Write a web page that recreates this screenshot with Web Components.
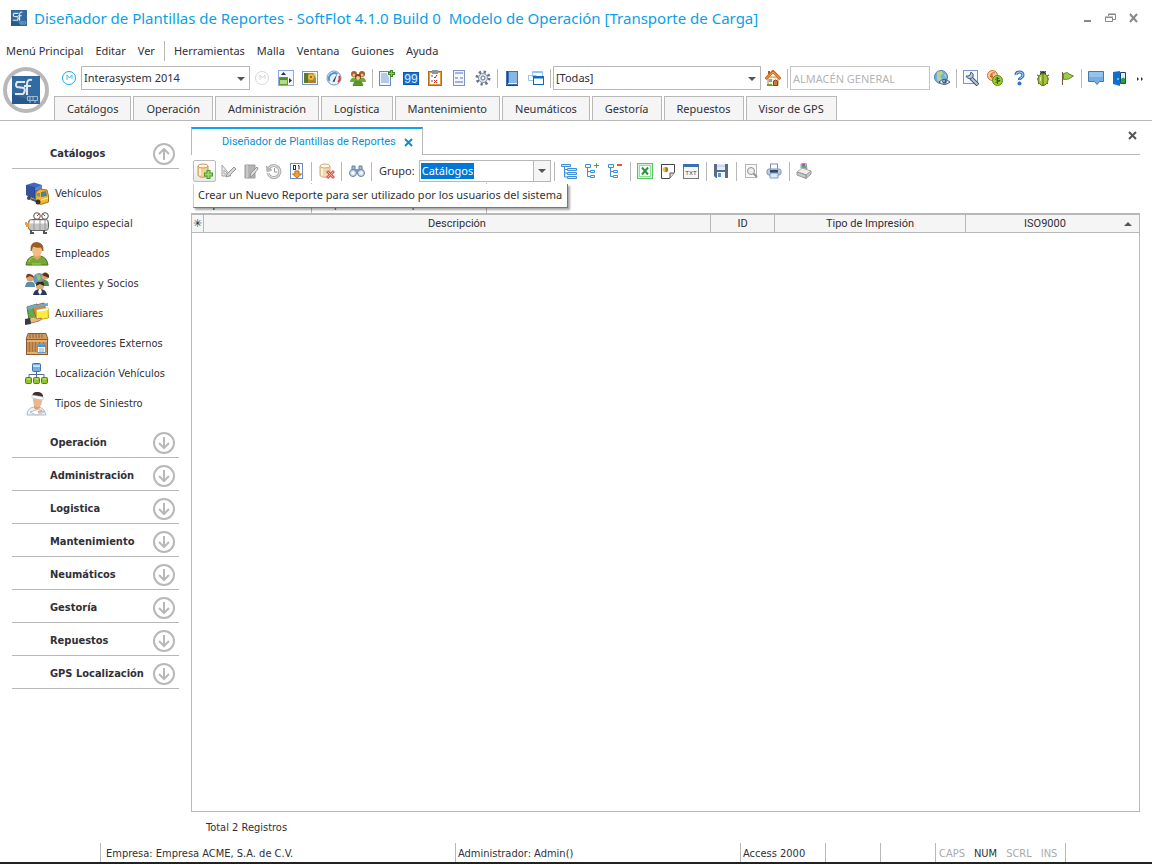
<!DOCTYPE html>
<html lang="es">
<head>
<meta charset="utf-8">
<meta name="viewport" content="width=device-width, initial-scale=1">
<title>Diseñador de Plantillas de Reportes - SoftFlot</title>
<style>
  :root {
    --line: #b8b8b8;
    --panel: #f5f5f5;
    --accent: #0a9fe8;
    --text: #303036;
    --ui: "Noto Sans", "Open Sans", sans-serif;
    --small: "DejaVu Sans Condensed", "Noto Sans", sans-serif;
    --grid: Roboto, "Liberation Sans", sans-serif;
  }

  body {
    margin: 0;
    background: #fff;
    color: var(--text);
    font: 11px/16px var(--ui);
  }
</style>
</head>
<body>
<app-window>
  <title-bar slot="title">Diseñador de Plantillas de Reportes - SoftFlot 4.1.0 Build 0 &nbsp;Modelo de Operación [Transporte de Carga]</title-bar>
  <menu-bar slot="menu"></menu-bar>

  <tool-bar slot="tools" label="Principal">
    <tool-button icon="mark" label="Empresa"></tool-button>
    <combo-box label="Empresa" value="Interasystem 2014" style="--width: 169px"></combo-box>
    <tool-button icon="mark-off" label="Cambiar empresa"></tool-button>
    <tool-button icon="layout" label="Distribución"></tool-button>
    <tool-button icon="picture" label="Imagen"></tool-button>
    <tool-button icon="gauge" label="Indicadores"></tool-button>
    <tool-button icon="users" label="Usuarios"></tool-button>
    <tool-separator></tool-separator>
    <tool-button icon="page-add" label="Nuevo documento"></tool-button>
    <tool-button icon="counter" label="Contadores"></tool-button>
    <tool-button icon="checklist" label="Pendientes"></tool-button>
    <tool-button icon="form" label="Formularios"></tool-button>
    <tool-button icon="gear" label="Configuración"></tool-button>
    <tool-separator></tool-separator>
    <tool-button icon="book" label="Bitácora"></tool-button>
    <tool-button icon="windows" label="Ventanas"></tool-button>
    <tool-separator></tool-separator>
    <combo-box label="Sucursal" value="[Todas]" style="--width: 208px"></combo-box>
    <tool-button icon="home" label="Inicio"></tool-button>
    <tool-separator></tool-separator>
    <text-field label="Almacén" value="ALMACÉN GENERAL"></text-field>
    <tool-button icon="globe" label="Ver en mapa"></tool-button>
    <tool-separator></tool-separator>
    <tool-button icon="wrench" label="Opciones"></tool-button>
    <tool-button icon="coins" label="Monedas"></tool-button>
    <tool-button icon="help" label="Ayuda"></tool-button>
    <tool-button icon="bug" label="Reportar error"></tool-button>
    <tool-button icon="flag" label="Marcar"></tool-button>
    <tool-separator></tool-separator>
    <tool-button icon="message" label="Mensajes"></tool-button>
    <tool-button icon="exit" label="Salir"></tool-button>
    <tool-button icon="more" label="Más botones" narrow></tool-button>
  </tool-bar>

  <category-tabs slot="tabs"></category-tabs>

  <side-nav slot="side">
    <nav-group heading="Catálogos" open>
      <nav-item icon="truck">Vehículos</nav-item>
      <nav-item icon="tank">Equipo especial</nav-item>
      <nav-item icon="person">Empleados</nav-item>
      <nav-item icon="partners">Clientes y Socios</nav-item>
      <nav-item icon="folders">Auxiliares</nav-item>
      <nav-item icon="crate">Proveedores Externos</nav-item>
      <nav-item icon="network">Localización Vehículos</nav-item>
      <nav-item icon="injured">Tipos de Siniestro</nav-item>
    </nav-group>
    <nav-group heading="Operación"></nav-group>
    <nav-group heading="Administración"></nav-group>
    <nav-group heading="Logistica"></nav-group>
    <nav-group heading="Mantenimiento"></nav-group>
    <nav-group heading="Neumáticos"></nav-group>
    <nav-group heading="Gestoría"></nav-group>
    <nav-group heading="Repuestos"></nav-group>
    <nav-group heading="GPS Localización"></nav-group>
  </side-nav>

  <document-pane heading="Diseñador de Plantillas de Reportes">
    <tool-bar slot="tools" label="Reportes" compact>
      <tool-button icon="db-add" label="Nuevo reporte" hot
        tip="Crear un Nuevo Reporte para ser utilizado por los usuarios del sistema"></tool-button>
      <tool-button icon="edit" label="Diseñar"></tool-button>
      <tool-button icon="notebook" label="Propiedades"></tool-button>
      <tool-button icon="undo" label="Restaurar"></tool-button>
      <tool-button icon="import" label="Importar"></tool-button>
      <tool-separator></tool-separator>
      <tool-button icon="db-delete" label="Eliminar"></tool-button>
      <tool-separator></tool-separator>
      <tool-button icon="binoculars" label="Buscar"></tool-button>
      <tool-separator></tool-separator>
      <combo-box label="Grupo:" value="Catálogos" show-label editing style="--width: 132px"></combo-box>
      <tool-separator></tool-separator>
      <tool-button icon="tree" label="Árbol"></tool-button>
      <tool-button icon="tree-add" label="Expandir"></tool-button>
      <tool-button icon="tree-remove" label="Contraer"></tool-button>
      <tool-separator></tool-separator>
      <tool-button icon="excel" label="Exportar a Excel"></tool-button>
      <tool-button icon="html" label="Exportar a HTML"></tool-button>
      <tool-button icon="txt" label="Exportar a texto"></tool-button>
      <tool-separator></tool-separator>
      <tool-button icon="save" label="Guardar"></tool-button>
      <tool-separator></tool-separator>
      <tool-button icon="preview" label="Vista previa"></tool-button>
      <tool-button icon="print" label="Imprimir"></tool-button>
      <tool-separator></tool-separator>
      <tool-button icon="printer-setup" label="Configurar impresora"></tool-button>
    </tool-bar>
    <report-grid></report-grid>
  </document-pane>

  <status-bar slot="status"></status-bar>
</app-window>

<script>
const treeRows = `<path d="M1.500 1.500h5v3h-5zM3.500 4.500v9h3M3.500 8.500h3" fill="#fff" stroke="#3f8fd8"/>`;
const database = (a, b) => `
  <path d="M1 3v9c0 3 10 3 10 0V3z" fill="${a}" stroke="${b}"/>
  <ellipse cx="6" cy="3" rx="5" ry="2" fill="#fffaf0" stroke="${b}"/>
  <path d="M3 5.500v7" stroke="#fff" stroke-width="2" opacity=".7"/>`;

const icons = {
  logo: `<rect width="28" height="28" fill="#336a9f"/>
    <path d="M0 18L28 28H0z" fill="#28598b"/>
    <path d="M13 6H5q-2 3 0 5l7 1q2 3-1 6H3" fill="none" stroke="#dfe8f0" stroke-width="2"/>
    <path d="M15 19V9c0-5 2-6 5-5M12 10h7" fill="none" stroke="#dfe8f0" stroke-width="2"/>
    <path d="M15.500 20.500h10v4h-10zM18 21v3M21 21v3M17 26h2M22 26h2" fill="none" stroke="#9dbad2"/>`,
  mark: `<circle cx="8" cy="8" r="6.500" fill="#fff" stroke="#13a8ef"/><path d="M6 10V5l2.500 3L11 5v4" fill="none" stroke="#4dbdf2"/>`,
  "mark-off": `<circle cx="8" cy="8" r="6.500" fill="#fff" stroke="#d8d8d8"/><path d="M6 10V5l2.500 3L11 5v4" fill="none" stroke="#d4d4d4"/>`,
  layout: `<rect x=".5" y=".5" width="15" height="15" fill="#f4f7fd" stroke="#8fa9d8"/>
    <rect x="1.500" y="7.500" width="8" height="7" fill="#b4dc87" stroke="#5d9d32"/><path d="M2 9h7" stroke="#4e8f2b" stroke-width="2"/>
    <path d="M3 5l2.500-3L8 5zM11 8l3 2.500-3 2.500z" fill="#2c2f3c"/>`,
  picture: `<rect x=".5" y="1.500" width="15" height="13" fill="#fff" stroke="#7695cc"/><rect x="2" y="3" width="12" height="10" fill="#8a9c36"/>
    <path d="M2 3h4v10H2z" fill="#5a7a2a"/><path d="M6 13l5-4 3 4z" fill="#c86f28"/><circle cx="9" cy="7" r="3" fill="#f3b63a"/><circle cx="9" cy="7" r="1" fill="#a04418"/><path d="M11 3l3 5V3z" fill="#e8d67a"/>`,
  gauge: `<circle cx="8" cy="8" r="7" fill="#eaf3fc" stroke="#7797bd"/><path d="M3.500 11a5.500 5.500 0 0 1 8-7" fill="none" stroke="#4a91e2" stroke-width="2"/>
    <path d="M13 6a5 5 0 0 1-1 6" fill="none" stroke="#e23b33" stroke-width="2"/><path d="M6.500 11.500L11 4 8.500 12z" fill="#33435a"/>`,
  users: `<circle cx="4" cy="4" r="3" fill="#a4612a"/><circle cx="12" cy="4" r="3" fill="#a4612a"/><path d="M0 12c0-6 8-6 8 0zM8 12c0-6 8-6 8 0z" fill="#6eac35"/>
    <circle cx="4" cy="5" r="1.500" fill="#f2bd85"/><circle cx="12" cy="5" r="1.500" fill="#f2bd85"/><circle cx="8" cy="7" r="3" fill="#7d4522"/><circle cx="8" cy="8" r="2" fill="#f6c890"/>
    <path d="M3 16c0-7 10-7 10 0z" fill="#59972c" stroke="#447920" stroke-width=".5"/>`,
  "page-add": `<rect x=".5" y="1.500" width="11" height="14" fill="#eff6ff" stroke="#678abf"/><path d="M2 4h6M2 6h7M2 8h8M2 10h8M2 12h8" stroke="#79a0d4"/>
    <path d="M12.500 0v7M9 3.500h7" stroke="#3f8b22" stroke-width="3"/><path d="M12.500 1v5M10 3.500h5" stroke="#84cf4c"/>`,
  counter: `<rect y="2" width="16" height="13" fill="#0b55b5"/><rect x="1" y="3" width="14" height="11" fill="#1a70d0"/>
    <text x="8" y="13" text-anchor="middle" font-family="Liberation Sans" font-size="12" fill="#d5efff">99</text>`,
  checklist: `<rect x="1.500" y="1.500" width="13" height="14" fill="#e59a39" stroke="#b76a1c"/><rect x="3" y="3" width="10" height="11" fill="#fff"/>
    <rect x="5" width="6" height="4" fill="#8a97a8"/><path d="M7 7l1 1 2-3M7 10l3 3M10 10l-3 3" stroke="#c03030" fill="none"/><path d="M4 6h2M4 11h2" stroke="#555"/>`,
  form: `<rect x="2.500" y=".5" width="11" height="15" fill="#f2f5fd" stroke="#7d93c0"/><path d="M4 3h8M4 8h3M9 8h3M4 12h8" stroke="#a5b5d6" stroke-width="2"/>`,
  gear: `<circle cx="8" cy="8" r="6" fill="none" stroke="#657288" stroke-width="3" stroke-dasharray="2.200 2.500"/><circle cx="8" cy="8" r="4.500" fill="#dfe6f0" stroke="#8a97ab"/><circle cx="8" cy="8" r="2" fill="#fff" stroke="#657288"/>`,
  book: `<rect x="2" y="1" width="12" height="14" fill="#3c72b0"/><rect x="5" y="2" width="8" height="11" fill="#89b7e5"/><path d="M3.500 1v13" stroke="#1d4679"/><path d="M4 13.500h9" stroke="#e7f0fa"/><path d="M2 15.500h12" stroke="#1c4a80"/>`,
  windows: `<path d="M4.500 7V1.500h10V6M4.500 2.500h10M5 10.500H.5v-5h8" fill="none" stroke="#8fc5ee"/><rect x="5.500" y="6.500" width="10" height="8" fill="#fff" stroke="#0e68c5"/><path d="M5 7.500h11" stroke="#0e68c5" stroke-width="2"/>`,
  home: `<path d="M3 7h10v8.500H3z" fill="#fff0d0" stroke="#b2864e"/><path d="M3 1h2v3H3z" fill="#b5522a"/><path d="M.5 9L8 1.500 15.500 9" fill="none" stroke="#c9661f" stroke-width="3"/><path d="M1 8.500L8 2l7 6.500" fill="none" stroke="#f9a650"/>
    <rect x="4" y="9" width="3" height="3" fill="#70a5dc"/><path d="M8.500 15.500V11q2-2 4 0v4.500z" fill="#c67a45" stroke="#804820"/><path d="M2 15h5" stroke="#67a13a" stroke-width="2"/>`,
  globe: `<circle cx="7" cy="7" r="6.500" fill="#74aee2" stroke="#4b7eae"/><path d="M3 2l5-1 1 3-3 2 2 3-2 4-3-3zM11 3l2 5-3-2z" fill="#b5d688"/><path d="M5 12q5-5 11 0-6 5-11 0z" fill="#eef3fb" stroke="#3f506e"/><circle cx="10.500" cy="11.500" r="2.300" fill="#3a5794"/><circle cx="10" cy="11" r=".8" fill="#fff"/>`,
  wrench: `<rect x=".5" y=".5" width="14" height="13" fill="#f6f9ff" stroke="#7796ce"/><path d="M15 15L8 8" stroke="#3f5473" stroke-width="4"/><path d="M14.500 14.500L8 8" stroke="#b4c6dc" stroke-width="2"/><path d="M3 6a4 4 0 0 0 7 1 4 4 0 0 0-2-5L7 5 5 6z" fill="#b4c6dc" stroke="#4b5f7e"/>`,
  coins: `<circle cx="5.500" cy="5.500" r="5" fill="#f9cb9c" stroke="#cf6d2c"/><path d="M8 3q-4-1-4 2.500T8 8M3 5h3M3 6.500h3" fill="none" stroke="#c85f24"/><circle cx="10.500" cy="10.500" r="5" fill="#9bce2e" stroke="#568717"/>
    <path d="M12.500 8.500q-4-1-4 .5t3.500 1.500-3.500 2M10.500 7v7" fill="none" stroke="#34600d"/>`,
  help: `<path d="M5 5q0-3 3.500-3T12 5q0 2-3.500 4v1" fill="none" stroke="#3774b8" stroke-width="3"/><path d="M5 5q0-3 3.500-3T12 5q0 2-3.500 4" fill="none" stroke="#a9d2f6"/><circle cx="8.500" cy="13.500" r="2" fill="#3774b8"/>`,
  bug: `<path d="M2 5l2 1M2 9h2M3 14l2-2M14 5l-2 1M14 9h-2M13 14l-2-2M5 1l2 2M11 1L9 3" stroke="#555"/><circle cx="8" cy="4" r="3" fill="#363d42"/><ellipse cx="8" cy="9.500" rx="5" ry="6" fill="#a4c637" stroke="#4f6c1b"/><path d="M8 4v11" stroke="#4f6c1b"/><path d="M5.500 7v4" stroke="#e0ef9b"/>`,
  flag: `<path d="M3.500 2v13" stroke="#775633"/><path d="M4.500 3.500l4-1 .5 1 5.500 2.500-5 3-5 .5z" fill="#9ccc4c" stroke="#5a9128"/>`,
  message: `<path d="M.5 1.500h15v10h-4L9 14.500 6.500 11.500h-6z" fill="#74aee2" stroke="#4579aa"/><path d="M1 2h14v5H1z" fill="#a2cdf2" opacity=".7"/>`,
  exit: `<path d="M1 2l7-1v15l-7-2z" fill="#0b72d0"/><path d="M8.500 2.500h5v11h-5z" fill="#d9f0ff" stroke="#17477b"/><path d="M9 9q3-3 4 0v4H9z" fill="#25a33a"/><circle cx="6" cy="9" r=".8" fill="#fff"/>`,
  more: `<path d="M4 7v4l2-2zM8 7v4l2-2z" fill="#333"/>`,
  "db-add": `${database("#f6d08c", "#c59b52")}<path d="M11.500 7v9M7 11.500h9" stroke="#4b9830" stroke-width="4"/><path d="M11.500 8v7M8 11.500h7" stroke="#96d86e" stroke-width="2"/>`,
  "db-delete": `${database("#f4d9ad", "#cfac74")}<path d="M8 8l7 7M15 8l-7 7" stroke="#d15a55" stroke-width="3"/><path d="M8.500 8.500l6 6M14.500 8.500l-6 6" stroke="#f3aca6"/>`,
  edit: `<path d="M2 2v11h9z" fill="#eee" stroke="#a2a2a2"/><path d="M4 7v4h4z" fill="#fff" stroke="#aaa"/><path d="M7 11l7-7 2 2-7 7-3 1z" fill="#d5d5d5" stroke="#999"/>`,
  notebook: `<path d="M2 2h10v13H2z" fill="#b4b4b4" stroke="#9b9b9b"/><path d="M4 2v13" stroke="#ddd"/><path d="M8 10l6-6 1 2-6 7-2 1z" fill="#e4e4e4" stroke="#929292"/>`,
  undo: `<path d="M3 5a6 6 0 1 1-1 5" fill="none" stroke="#ababab" stroke-width="3"/><path d="M3 5a6 6 0 1 1-1 5" fill="none" stroke="#eee"/><path d="M0 3l1 6 5-2z" fill="#bbb" stroke="#999" stroke-width=".5"/><path d="M8.500 5v4h3" fill="none" stroke="#999"/>`,
  import: `<rect x="1.500" y=".5" width="12" height="15" fill="#fff" stroke="#6f8dc4"/><rect x="4.500" y="2.500" width="2" height="4" fill="none" stroke="#333"/><path d="M9 2.500h1v4" fill="none" stroke="#333"/><path d="M6 8h4v3h2.500L8 15 3.500 11H6z" fill="#f2a03c" stroke="#bb6a1a"/>`,
  binoculars: `<path d="M3 3h3v4H3zM10 3h3v4h-3z" fill="#a9bcd8" stroke="#667da3"/><path d="M6 6h4v3H6z" fill="#8498bd"/><circle cx="4" cy="10" r="3.500" fill="#cfdcef" stroke="#667da3"/><circle cx="12" cy="10" r="3.500" fill="#cfdcef" stroke="#667da3"/><circle cx="4" cy="10" r="1.500" fill="#fff"/><circle cx="12" cy="10" r="1.500" fill="#fff"/>`,
  tree: `<path d="M.5 1.500h9v2h-9zM3.500 4v10H6M3.500 6.500H6M3.500 10H6M6.500 5.500h9v2h-9zM6.500 9.500h9v2h-9zM6.500 13.500h9v2h-9z" fill="#d4e9fc" stroke="#3f8fd8"/>`,
  "tree-add": `${treeRows}<path d="M6.500 7.500h4v2h-4zM6.500 12.500h4v2h-4z" fill="#fff" stroke="#3f8fd8"/><path d="M12.500 0v5M10 2.500h5" stroke="#559955"/>`,
  "tree-remove": `${treeRows}<path d="M6.500 7.500h4v2h-4zM6.500 12.500h4v2h-4z" fill="#fff" stroke="#3f8fd8"/><path d="M10 2h5" stroke="#e0513f" stroke-width="2"/>`,
  excel: `<rect x=".5" y=".5" width="15" height="15" fill="#d5f3d8" stroke="#52c860"/><rect x="2.500" y="2.500" width="11" height="11" fill="#fff" stroke="#93dc9b"/><path d="M5 4.500l6 7M11 4.500l-6 7" stroke="#279535" stroke-width="2"/>`,
  html: `<path d="M1.500 1.500h13v8l-5 6h-8z" fill="#fff" stroke="#444"/><path d="M14 10h-4v5" fill="#ddd" stroke="#555"/><circle cx="5.500" cy="6.500" r="2.800" fill="#f0c23b"/><path d="M5.500 6.500V4A2.500 2.500 0 0 1 8 6.500z" fill="#3a9f47"/><path d="M5.500 6.500H8A2.500 2.500 0 0 1 5.500 9z" fill="#dd4137"/>`,
  txt: `<rect x=".5" y="1.500" width="15" height="14" fill="#f6f6f6" stroke="#777"/><path d="M0 2.500h16" stroke="#386fb5" stroke-width="3"/><text x="8" y="12" text-anchor="middle" font-family="Liberation Sans" font-size="6" fill="#444">TXT</text>`,
  save: `<path d="M1 1h14v14H3l-2-2z" fill="#5a6b88"/><path d="M4 1h8v6H4z" fill="#e4edf8"/><path d="M4 9h8v6H4z" fill="#f2f4f8"/><path d="M5 10h3v4H5z" fill="#4a9ad8"/><path d="M4 3h8" stroke="#9fc7ea"/>`,
  preview: `<rect x="2.500" y="1.500" width="11" height="13" fill="#fafafa" stroke="#b5b5b5"/><circle cx="8" cy="8" r="3.500" fill="#eee" stroke="#929292"/><path d="M10.500 10.500L14 14" stroke="#929292" stroke-width="2"/>`,
  print: `<rect x="4.500" y="1" width="7" height="6" fill="#fff" stroke="#7d8fb5"/><rect x="1" y="6" width="14" height="6" rx="2" fill="#c0cce2" stroke="#7f92b8"/><path d="M4 7h8v3H4z" fill="#34486e"/><path d="M4 10h8v5H4z" fill="#d7ebff" stroke="#7f9cc7"/>`,
  "printer-setup": `<path d="M5 5V1l5-1 1 6z" fill="#a7cfee" stroke="#8d99a8"/><path d="M6 2h3" stroke="#b34dbb" stroke-width="2"/><path d="M6 4h4" stroke="#59b35a" stroke-width="2"/><path d="M1 9l5-4 9 3-4 4z" fill="#eee" stroke="#aaa"/><path d="M1 9v3l9 3.500V12zM10 12l5-4v3l-5 4.500z" fill="#c9c9c9" stroke="#999"/>`,
  truck: `<path d="M1 3l8-2.500L17 3v12l-7 2-9-4z" fill="#4167bf"/><path d="M1 3l9 2.500V17l-9-4z" fill="#294995"/><path d="M2 4v9M4 4.500v10M6 5v10M8 6v10" stroke="#3b5ca9"/><path d="M10 6l7-3v5h-7z" fill="#5d84d7"/><path d="M11 10l4-3 7 1 1.500 6v6l-8 2.500-5-3z" fill="#efb92d" stroke="#a36f14"/><path d="M16 10l5-1 1 5-6 1z" fill="#517e99"/><path d="M12 11l3 0v4l-3-1z" fill="#6d96ae"/><path d="M16 18l7-2" stroke="#fff2a8"/><circle cx="13" cy="20" r="2.500" fill="#333"/><circle cx="4" cy="16" r="2" fill="#444"/><path d="M6 17l5 2" stroke="#555" stroke-width="2"/>`,
  tank: `<circle cx="12" cy="4" r="3.300" fill="#fff" stroke="#555"/><circle cx="20" cy="4" r="3.300" fill="#fff" stroke="#555"/><path d="M12 4l2-2M20 4l-2-2" stroke="#d33"/><path d="M12 8v3M20 8v3" stroke="#666" stroke-width="2"/><rect x="3.500" y="7.500" width="20" height="11" rx="3" fill="#c4c4c4" stroke="#666"/><path d="M5 10h17" stroke="#fff" stroke-width="3"/><path d="M9 8v10M15 8v10M20 8v10" stroke="#999"/><path d="M6 18v3h3M19 18v3h3" fill="none" stroke="#555" stroke-width="2"/><path d="M1 10v2h3M1 14h3" fill="none" stroke="#e2a13b" stroke-width="2"/>`,
  person: `<path d="M1 23q1-8 8-9h6q7 1 8 9z" fill="#75a936" stroke="#477719"/><path d="M9 12h6l1 3-4 3-4-3z" fill="#e4a265"/><ellipse cx="12" cy="8" rx="5" ry="6.500" fill="#f1bd83"/><path d="M6 9Q5 0 12 .5T18 9L16 5Q11 6 8 4z" fill="#a05c22" stroke="#78400f" stroke-width=".6"/><path d="M4 20q1-4 4-5M7 22h9" stroke="#a9d263" fill="none"/>`,
  partners: `<circle cx="14" cy="7" r="6" fill="#6a96bf"/><path d="M11 2l4 1 1 4-3 2z" fill="#9ac069"/><circle cx="5" cy="6" r="3.500" fill="#d8a36d"/><path d="M1 6Q1 1 5 2t4 4L5 4z" fill="#72411f"/><path d="M0 15q1-6 5-5 5-1 5 5z" fill="#5c8fae"/><circle cx="20" cy="4" r="3.500" fill="#d7a36e"/><path d="M17 3q3-5 7 0v3z" fill="#54361f"/><path d="M16 14q0-7 4-6 4 0 4 6z" fill="#548c4c"/><circle cx="15" cy="14" r="4" fill="#dfac77"/><path d="M11 14q0-5 4-4 5-1 4 4l-4-2z" fill="#392a26"/><path d="M8 23q1-6 7-6 6 0 7 6z" fill="#26395c"/><path d="M14 17h2l1 3-2 3-2-3z" fill="#fff"/>`,
  folders: `<path d="M2 5l10-3 2 12-10 4z" fill="#66aa49" stroke="#3d7a35"/><path d="M7 4l12-3 3 12-11 2z" fill="#d68742" stroke="#a55d29"/><path d="M11 3l12-2v3l-12 1z" fill="#73a6c9"/><path d="M2 5l9-3 1 3-9 3z" fill="#73a6c9"/><path d="M11 8l12-2 .5 10-12 2z" fill="#f9eb3f" stroke="#c6a823"/><path d="M12 9l11-2" stroke="#fff" stroke-width="2"/><path d="M4 17q5-4 8 0l4-1q2 1-2 3l-8 2z" fill="#ecb887" stroke="#b37a49"/><path d="M0 17l5-1 1 6-6 1z" fill="#333b4d"/>`,
  crate: `<path d="M3 1.500h18l2 6H1z" fill="#d09b65" stroke="#8d5a2c"/><path d="M5 2v4M8 2v4M11 2v4M14 2v4M17 2v4" stroke="#99632f"/><rect x="1.500" y="7.500" width="21" height="15" fill="#c88d54" stroke="#8d5a2c"/><path d="M2 9h20M2 21h20" stroke="#e1b17c" stroke-width="2"/><path d="M4.500 10v10M7.500 10v10M10.500 10v10M14.500 10v10M18.500 10v10" stroke="#a8733f"/><rect x="12.500" y="12.500" width="8" height="8" fill="#fff" stroke="#699dc4"/><path d="M13 14h7" stroke="#4597db" stroke-width="2"/><path d="M14 17h5M14 19h5" stroke="#8a9fb2"/>`,
  network: `<rect x="7.500" y="1.500" width="8" height="8" rx="1" fill="#79aee5" stroke="#3e73ac"/><path d="M8 3h7v2H8z" fill="#c4e0fa"/><path d="M11.500 10v3M4 16v-3.500h15V16M11.500 13v3" fill="none" stroke="#5a6d86"/><rect x=".5" y="15.500" width="6" height="6" rx="1" fill="#8fc431" stroke="#538021"/><rect x="8.500" y="15.500" width="6" height="6" rx="1" fill="#8fc431" stroke="#538021"/><rect x="16.500" y="15.500" width="6" height="6" rx="1" fill="#8fc431" stroke="#538021"/><path d="M2 17h3M10 17h3M18 17h3" stroke="#d8ef88"/>`,
  injured: `<path d="M2 23q0-7 7-8h6q5 2 6 8z" fill="#ecf1f6" stroke="#b0bdc9"/><path d="M9 11h6v5q-4 3-6 0z" fill="#dc9f75"/><path d="M8 4q9-3 9 4t-4 7q-4 1-5-6z" fill="#efb68e"/><path d="M7 4q1-5 7-4 5 1 4 7l-3-3z" fill="#43332c"/><path d="M7 3l11 2v3L7 6z" fill="#fff" stroke="#b7c2cc" stroke-width=".6"/><path d="M5 20l9-3 5 3-8 3z" fill="#fff" stroke="#b7c2cc"/><path d="M13 20l4-1" stroke="#e3a57a" stroke-width="2"/>`
};

function define(name, markup, setup) {
  const template = document.createElement("template");
  template.innerHTML = markup;

  customElements.define(name, class extends HTMLElement {
    constructor() {
      super();
      this.attachShadow({ mode: "open" });
      this.shadowRoot.append(template.content.cloneNode(true));
    }

    connectedCallback() {
      if (this.ready) return;
      this.ready = true;
      setup?.(this, this.shadowRoot);
    }
  });
}

define("ui-icon", `
  <style>
    :host { display: block; flex: none; width: 16px; height: 16px; }
    svg { display: block; width: 100%; height: 100%; }
  </style>
  <svg aria-hidden="true"></svg>
`, (host, root) => {
  const name = host.getAttribute("name");
  const box = host.getAttribute("box") || 16;
  const svg = root.querySelector("svg");
  svg.setAttribute("viewBox", `0 0 ${box} ${box}`);
  svg.innerHTML = icons[name] || "";
});

define("app-window", `
  <style>
    :host { display: flex; flex-direction: column; min-height: 100vh; }
    header { border-bottom: 1px solid var(--line); }
    .ribbon { display: flex; align-items: flex-start; gap: 5px; padding-left: 3px; }
    .orb {
      flex: none;
      display: grid;
      place-items: center;
      box-sizing: border-box;
      width: 46px;
      height: 46px;
      margin-top: 2px;
      padding: 0;
      border: 4px solid #b8b8b8;
      border-radius: 50%;
      background: #fff;
    }
    .orb ui-icon { width: 28px; height: 28px; }
    .bars { flex: 1; min-width: 0; }
    .work { flex: 1; display: flex; min-height: 0; }
    ::slotted(side-nav) { flex: none; }
    ::slotted(document-pane) { flex: 1; min-width: 0; }
  </style>
  <header>
    <slot name="title"></slot>
    <slot name="menu"></slot>
    <div class="ribbon">
      <button class="orb" aria-label="SoftFlot"><ui-icon name="logo" box="28"></ui-icon></button>
      <div class="bars">
        <slot name="tools"></slot>
        <slot name="tabs"></slot>
      </div>
    </div>
  </header>
  <div class="work">
    <slot name="side"></slot>
    <slot></slot>
  </div>
  <slot name="status"></slot>
`);

define("title-bar", `
  <style>
    :host { display: flex; align-items: center; height: 36px; padding: 0 11px; color: var(--accent); }
    h1 { flex: 1; margin: 0 0 0 7px; font: 400 15px/24px var(--ui); white-space: nowrap; }
    .controls { display: flex; gap: 8px; }
    button { width: 15px; height: 16px; padding: 0; border: 0; background: none; }
    svg { display: block; width: 15px; height: 16px; fill: none; stroke: #888; }
  </style>
  <ui-icon name="logo" box="28"></ui-icon>
  <h1><slot></slot></h1>
  <div class="controls">
    <button aria-label="Minimizar"><svg viewBox="0 0 15 16"><path d="M4 11h7" stroke-width="2"/></svg></button>
    <button aria-label="Restaurar"><svg viewBox="0 0 15 16"><path d="M5.500 6V4.500h7v5H10M2.500 7.500h7v4h-7z"/><path d="M5 4h8M2 7h8" /></svg></button>
    <button aria-label="Cerrar"><svg viewBox="0 0 15 16"><path d="M4 4l7 8M11 4l-7 8" stroke-width="2"/></svg></button>
  </div>
`);

define("menu-bar", `
  <style>
    :host { display: block; padding: 4px 0; }
    nav { display: flex; align-items: center; gap: 12px; height: 21px; padding-left: 6px; }
    button { padding: 0; border: 0; background: none; color: inherit; font: 11px/16px var(--ui); white-space: nowrap; }
    .split { padding-left: 9px; margin-left: -3px; border-left: 1px solid var(--line); line-height: 20px; }
  </style>
  <nav aria-label="Menú">
    <button>Menú Principal</button>
    <button>Editar</button>
    <button>Ver</button>
    <button class="split">Herramientas</button>
    <button>Malla</button>
    <button>Ventana</button>
    <button>Guiones</button>
    <button>Ayuda</button>
  </nav>
`);

define("tool-bar", `
  <style>
    :host { --button: 24px; --gap: 2px; display: block; padding: 1px 0 6px 3px; }
    :host([compact]) { --button: 23px; --gap: 3px; padding: 4px 2px 0; }
    div { display: flex; align-items: center; height: 24px; }
  </style>
  <div role="toolbar"><slot></slot></div>
`, (host, root) => {
  root.querySelector("div").setAttribute("aria-label", host.getAttribute("label"));
});

define("tool-separator", `
  <style>
    :host { flex: none; display: block; width: 1px; height: 19px; margin: 0 var(--gap); background: var(--line); }
  </style>
`);

define("tool-button", `
  <style>
    :host { position: relative; flex: none; display: block; width: var(--button); }
    :host([narrow]) { width: 14px; overflow: hidden; }
    button {
      display: grid;
      place-items: center;
      box-sizing: border-box;
      width: 100%;
      height: 22px;
      padding: 0;
      border: 1px solid transparent;
      border-radius: 2px;
      background: none;
    }
    :host([hot]) button { border-color: #bcbcbc; background: linear-gradient(#fff, #e9e9e9); }
    .tip {
      position: absolute;
      z-index: 1;
      top: 24px;
      left: 0;
      padding: 2px 5px 3px 4px;
      border-right: 1px solid #777;
      border-bottom: 1px solid #777;
      border-left: 1px solid #ccc;
      background: #fff;
      box-shadow: 2px 2px 2px rgba(0, 0, 0, .35);
      color: #333;
      line-height: 18px;
      white-space: nowrap;
    }
  </style>
  <button><ui-icon></ui-icon></button>
`, (host, root) => {
  root.querySelector("button").setAttribute("aria-label", host.getAttribute("label"));
  const icon = document.createElement("ui-icon");
  icon.setAttribute("name", host.getAttribute("icon"));
  root.querySelector("ui-icon").replaceWith(icon);

  if (host.hasAttribute("tip")) {
    const tip = document.createElement("div");
    tip.className = "tip";
    tip.setAttribute("role", "tooltip");
    tip.textContent = host.getAttribute("tip");
    root.append(tip);
  }
});

define("combo-box", `
  <style>
    :host { display: flex; align-items: center; }
    label { display: none; padding: 0 4px; white-space: nowrap; }
    :host([show-label]) label { display: block; }
    .box {
      position: relative;
      display: flex;
      align-items: center;
      box-sizing: border-box;
      width: var(--width);
      height: 24px;
      border: 1px solid var(--line);
      background: #fff;
    }
    select {
      appearance: none;
      flex: 1;
      min-width: 0;
      height: 22px;
      padding: 0 18px 0 2px;
      border: 0;
      outline: 0;
      background: none;
      color: inherit;
      font: 11px/16px var(--ui);
    }
    .arrow { position: absolute; right: 0; width: 16px; height: 100%; pointer-events: none; }
    .arrow::before {
      content: "";
      position: absolute;
      inset: 10px 4px auto auto;
      border: 4px solid transparent;
      border-top-color: #555;
      border-bottom: 0;
    }
    :host([editing]) .box { height: 22px; padding-left: 1px; }
    :host([editing]) select {
      flex: none;
      field-sizing: content;
      height: 16px;
      padding: 0 1px;
      background: #0078d7;
      color: #fff;
    }
    :host([editing]) .arrow { border-left: 1px solid var(--line); background: var(--panel); }
    :host([editing]) .arrow::before { top: 8px; }
  </style>
  <label for="field"></label>
  <span class="box">
    <select id="field"><option></option></select>
    <span class="arrow"></span>
  </span>
`, (host, root) => {
  const label = host.getAttribute("label");
  if (host.hasAttribute("show-label")) {
    root.querySelector("label").textContent = label;
  } else {
    root.querySelector("label").remove();
    root.querySelector("select").setAttribute("aria-label", label);
  }
  root.querySelector("option").textContent = host.getAttribute("value");
});

define("text-field", `
  <style>
    :host { display: block; width: 140px; }
    input {
      box-sizing: border-box;
      width: 100%;
      height: 24px;
      padding: 0 2px;
      border: 1px solid #c4c4c4;
      background: #fff;
      color: #b4b4b4;
      font: 11px/16px var(--ui);
    }
  </style>
  <input type="text" disabled>
`, (host, root) => {
  const input = root.querySelector("input");
  input.setAttribute("aria-label", host.getAttribute("label"));
  input.value = host.getAttribute("value");
});

define("category-tabs", `
  <style>
    :host { display: block; }
    nav { display: flex; gap: 2px; }
    button {
      height: 24px;
      padding: 1px 12px 0;
      border: 1px solid var(--line);
      border-bottom: 0;
      background: var(--panel);
      color: inherit;
      font: 11px/16px var(--ui);
      white-space: nowrap;
    }
  </style>
  <nav aria-label="Categorías">
    <button>Catálogos</button>
    <button>Operación</button>
    <button>Administración</button>
    <button>Logística</button>
    <button>Mantenimiento</button>
    <button>Neumáticos</button>
    <button>Gestoría</button>
    <button>Repuestos</button>
    <button>Visor de GPS</button>
  </nav>
`);

define("side-nav", `
  <style>
    :host { display: block; box-sizing: border-box; width: 191px; padding: 15px 12px 0; }
  </style>
  <nav aria-label="Módulos"><slot></slot></nav>
`);

define("nav-group", `
  <style>
    :host { display: block; }
    button {
      display: flex;
      align-items: center;
      justify-content: space-between;
      width: 100%;
      height: 33px;
      padding: 4px 4px 0 38px;
      border: 0;
      border-bottom: 1px solid var(--line);
      background: none;
      color: inherit;
      font: 700 11px/16px var(--small);
      white-space: nowrap;
    }
    svg { flex: none; width: 24px; height: 24px; margin-right: -1px; fill: none; stroke: #b8b8b8; stroke-width: 2; }
    :host([open]) svg { transform: rotate(180deg); }
    .items { display: none; padding: 10px 0 6px; }
    :host([open]) .items { display: block; }
  </style>
  <button>
    <span></span>
    <svg viewBox="0 0 24 24" aria-hidden="true"><circle cx="12" cy="12" r="10"/><path d="M12 6v11M7 12l5 5 5-5"/></svg>
  </button>
  <div class="items"><slot></slot></div>
`, (host, root) => {
  const button = root.querySelector("button");
  root.querySelector("span").textContent = host.getAttribute("heading");
  button.setAttribute("aria-expanded", host.hasAttribute("open"));
  button.addEventListener("click", () => {
    button.setAttribute("aria-expanded", host.toggleAttribute("open"));
  });
});

define("nav-item", `
  <style>
    :host { display: block; }
    a {
      display: flex;
      align-items: center;
      gap: 6px;
      height: 30px;
      padding-left: 13px;
      color: inherit;
      font: 11px/16px var(--small);
      text-decoration: none;
      white-space: nowrap;
    }
    ui-icon { width: 24px; height: 24px; }
  </style>
  <a href="#"><span><slot></slot></span></a>
`, (host, root) => {
  const icon = document.createElement("ui-icon");
  icon.setAttribute("box", "24");
  icon.setAttribute("name", host.getAttribute("icon"));
  root.querySelector("a").prepend(icon);
});

define("document-pane", `
  <style>
    :host { display: flex; flex-direction: column; padding: 6px 12px 0 0; }
    .tabs { display: flex; height: 28px; }
    .tab {
      display: flex;
      align-items: center;
      gap: 6px;
      padding: 0 7px 0 30px;
      border: 1px solid var(--line);
      border-top: 2px solid #10a4ee;
      border-bottom: 0;
      color: #0a8fd4;
      font: 11px/16px var(--grid);
      white-space: nowrap;
    }
    .rest { flex: 1; display: flex; justify-content: flex-end; align-items: flex-start; border-bottom: 1px solid var(--line); }
    button { display: block; padding: 0; border: 0; background: none; color: inherit; }
    .rest button { padding: 2px 1px 0 0; color: #555; }
    svg { display: block; width: 13px; height: 13px; stroke: currentColor; stroke-width: 2; }
    ::slotted(report-grid) { flex: 1; }
  </style>
  <div class="tabs">
    <div class="tab">
      <span></span>
      <button aria-label="Cerrar pestaña"><svg viewBox="0 0 13 13"><path d="M3 3l7 7M10 3l-7 7"/></svg></button>
    </div>
    <div class="rest">
      <button aria-label="Cerrar documento"><svg viewBox="0 0 13 13"><path d="M3 3l7 7M10 3l-7 7"/></svg></button>
    </div>
  </div>
  <slot name="tools"></slot>
  <slot></slot>
`, (host, root) => {
  root.querySelector(".tab span").textContent = host.getAttribute("heading");
});

define("report-grid", `
  <style>
    :host { display: flex; flex-direction: column; }
    .pages { display: flex; height: 30px; }
    .pages button {
      height: 30px;
      padding: 13px 7px 0 9px;
      border: 0;
      border-right: 1px solid var(--line);
      background: none;
      color: #333;
      font: 11px/16px var(--grid);
      white-space: nowrap;
    }
    .pages button + button { color: #0072b0; }
    .grid { flex: 1; border: 1px solid var(--line); border-top-width: 2px; }
    table { width: 100%; border-collapse: collapse; table-layout: fixed; font: 11px/16px var(--grid); }
    th { height: 17px; padding: 0; border-bottom: 1px solid var(--line); background: var(--panel); font-weight: 400; }
    th + th { border-left: 1px solid var(--line); }
    .mark { width: 11px; }
    .id { width: 63px; }
    .kind { width: 190px; }
    .iso { width: 173px; }
    .sort { display: flex; align-items: center; padding-right: 7px; }
    .sort span { flex: 1; }
    .sort::after { content: ""; border: 4px solid transparent; border-top: 0; border-bottom-color: #555; }
    p { margin: 0; padding: 8px 15px 7px; font: 11px/16px var(--small); }
  </style>
  <div class="pages">
    <button>Reportes del Sistema</button>
    <button>Reportes Creados por el Usuario</button>
  </div>
  <div class="grid">
    <table>
      <thead>
        <tr>
          <th class="mark">✳</th>
          <th>Descripción</th>
          <th class="id">ID</th>
          <th class="kind">Tipo de Impresión</th>
          <th class="iso" aria-sort="ascending"><div class="sort"><span>ISO9000</span></div></th>
        </tr>
      </thead>
      <tbody></tbody>
    </table>
  </div>
  <p>Total 2 Registros</p>
`);

define("status-bar", `
  <style>
    :host {
      display: grid;
      grid-template-columns: 100px 355fr 285fr 85px 55px 55px 130px 87px;
      height: 19px;
      border-bottom: 2px solid #222;
      font: 11px/21px var(--small);
      white-space: nowrap;
    }
    div { height: 19px; }
    div + div { padding-left: 2px; border-left: 1px solid var(--line); }
    div.company { padding-left: 5px; }
    div.keys { display: flex; gap: 9px; padding-left: 3px; color: #aaa; }
    b { color: var(--text); font-weight: 400; }
  </style>
  <div></div>
  <div class="company">Empresa: Empresa ACME, S.A. de C.V.</div>
  <div>Administrador: Admin()</div>
  <div>Access 2000</div>
  <div></div>
  <div></div>
  <div class="keys"><span>CAPS</span><b>NUM</b><span>SCRL</span><span>INS</span></div>
  <div></div>
`);
</script>
</body>
</html>
